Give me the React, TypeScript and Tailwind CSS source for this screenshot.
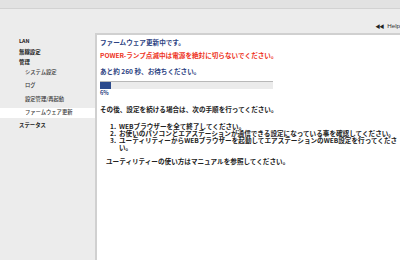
import React from "react";

const sideTop = "h-[10.5px] flex items-center pl-[19px] text-[5.4px] font-bold text-[#222]";
const sideSub = "h-[10px] flex items-center pl-[25px] text-[5.3px] font-medium text-[#3a3a3a]";

export default function App() {
  return (
    <div className="w-[400px] h-[260px] overflow-hidden bg-[#ececec] flex flex-col font-['Noto_Sans_CJK_JP','Noto_Sans',sans-serif]">
      <div className="h-[9px] bg-[#e2e2e2] border-b border-[#d2d2d2]" />
      <div className="h-[24px] flex items-center justify-end pt-[10px] pr-0 gap-[2px]">
        <span className="text-[5px] text-[#222] tracking-[-1px]">◀◀</span>
        <span className="text-[6.2px] text-[#333] font-['Liberation_Sans',sans-serif] pl-[2px]">Help</span>
      </div>
      <div className="flex-1 flex">
        <div className="w-[95px] pt-[3px] flex flex-col">
          <div className={sideTop}>LAN</div>
          <div className={sideTop}>無線設定</div>
          <div className={sideTop}>管理</div>
          <div className="flex flex-col gap-[3.4px] mt-[0.5px]">
            <div className={sideSub}>システム設定</div>
            <div className={sideSub}>ログ</div>
            <div className={sideSub}>設定管理/再起動</div>
            <div className={sideSub + " bg-white"}>ファームウェア更新</div>
          </div>
          <div className={sideTop + " mt-[1.5px] h-[10px]"}>ステータス</div>
        </div>
        <div className="flex-1 bg-white border-t-2 border-l-2 border-[#d0d0d0] pl-[3px] pt-[2.3px] flex flex-col text-[6.6px] font-bold whitespace-nowrap">
          <div className="leading-[10px] text-[#2c4282]">ファームウェア更新中です。</div>
          <div className="leading-[10px] mt-[3px] text-[#ee3322]">POWER-ランプ点滅中は電源を絶対に切らないでください。</div>
          <div className="leading-[10px] mt-[5.4px] text-[#2c4282]">あと約 260 秒、お待ちください。</div>
          <div className="mt-[5.3px] w-[173px] h-[8px] bg-[#ebebeb] border-t border-[#b8b8b8] flex">
            <div className="w-[11px] h-full bg-[#2c4a8c]" />
          </div>
          <div className="leading-[7px] mt-[1.5px] text-[5.6px] text-[#2c4282]">6%</div>
          <div className="leading-[10px] mt-[7px] text-[#222]">その後、設定を続ける場合は、次の手順を行ってください。</div>
          <div className="mt-[8.5px] pl-[10px] flex flex-col text-[#222]">
            <div className="flex leading-[7px]"><span className="w-[9px]">1.</span><span>WEBブラウザーを全て終了してください。</span></div>
            <div className="flex leading-[7px]"><span className="w-[9px]">2.</span><span>お使いのパソコンとエアステーションが通信できる設定になっている事を確認してください。</span></div>
            <div className="flex leading-[7px]"><span className="w-[9px]">3.</span><span>ユーティリティーからWEBブラウザーを起動してエアステーションのWEB設定を行ってくださ<br />い。</span></div>
          </div>
          <div className="leading-[10px] mt-[5px] pl-[6px] text-[#222]">ユーティリティーの使い方はマニュアルを参照してください。</div>
        </div>
      </div>
    </div>
  );
}
